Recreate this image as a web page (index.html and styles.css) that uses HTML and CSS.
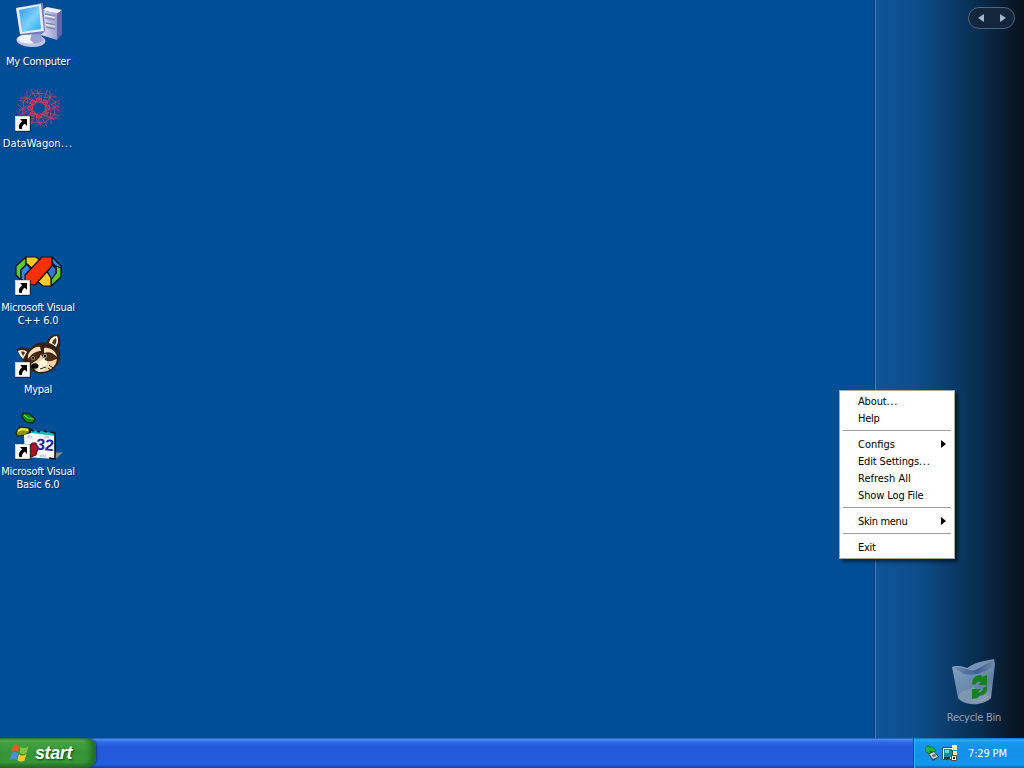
FILE: index.html
```html
<!DOCTYPE html>
<html lang="en">
<head>
<meta charset="utf-8">
<title>Desktop</title>
<link rel="stylesheet" href="styles.css">
</head>
<body>
<svg class="defs" width="0" height="0" aria-hidden="true">
  <defs>
    <g id="shortcut">
      <rect x="0" y="0" width="15" height="15" fill="#fff"/>
      <path d="M.5 15V.5H15" fill="none" stroke="#d5d2c8"/>
      <path d="M0 15.3H15.3V0" fill="none" stroke="#222"/>
      <path d="M5 3h7v7l-2.200-2.200C7.500 9.300 7 10.500 7 13H4.500C3 10 4.500 7.500 7.200 5.200z" fill="#000"/>
    </g>
    <g id="wedge" fill="none" stroke="#c4406c" stroke-width=".9">
      <path d="M-6-22L3-13M4-22L-5-12M-8-17L7-16M-2-21L1-11M9-21L6-11M-4-11L4-7M3-12L-3-6"/>
      <circle cx="0" cy="-9" r="2.500" stroke="#e0384c" stroke-width="1.300"/>
    </g>
  </defs>
</svg>
<main class="desktop">
  <aside class="sidebar">
    <div class="pager">
      <svg width="47" height="22" viewBox="0 0 47 22"><path d="M10 11l6-4v8zM38 11l-6-4v8z" fill="#a6b4d0"/></svg>
    </div>
  </aside>

  <div class="icon computer">
    <svg width="48" height="48" viewBox="0 0 48 48">
      <defs>
        <linearGradient id="scr" x1="0" y1="0" x2="1" y2="1"><stop offset="0" stop-color="#2f9af0"/><stop offset=".55" stop-color="#7bd2fb"/><stop offset="1" stop-color="#20a8ee"/></linearGradient>
        <linearGradient id="tow" x1="0" x2="1"><stop offset="0" stop-color="#dcdff4"/><stop offset="1" stop-color="#9a9fd0"/></linearGradient>
      </defs>
      <path d="M27 7l5-3 15 3-5 4z" fill="#edeefb"/>
      <path d="M26 7l16 3v27l-16-5z" fill="url(#tow)"/>
      <path d="M42 11l5-4v24l-5 6z" fill="#6268aa"/>
      <path d="M30 11l10 2M30 15l10 2M31 20l9 2M31 24l9 2" stroke="#8287b9" stroke-width="1.500"/>
      <path d="M30 12.500l10 2M31 21.500l9 2" stroke="#fff"/>
      <ellipse cx="16" cy="37.500" rx="14.500" ry="6.500" fill="#c0c4e6" transform="rotate(3 16 37)"/>
      <ellipse cx="15" cy="36" rx="12" ry="4.500" fill="#f1f2fb"/>
      <path d="M17 30l9 1 2 7-8 3-5-4z" fill="#9aa2d2"/>
      <path d="M1 5l25-5h2l2 28-3 3-22 1z" fill="#7379b4"/>
      <path d="M1 5l25-4 3 27-24 3z" fill="#e9ebf9"/>
      <path d="M4 7l20-4 2 23-19 3z" fill="url(#scr)"/>
    </svg>
    <span class="label">My Computer</span>
  </div>

  <div class="icon wagon">
    <svg width="48" height="48" viewBox="0 0 48 48">
      <g transform="translate(24 23) scale(.96 .88)">
        <use href="#wedge"/><use href="#wedge" transform="rotate(45)"/><use href="#wedge" transform="rotate(90)"/><use href="#wedge" transform="rotate(135)"/>
        <use href="#wedge" transform="rotate(180)"/><use href="#wedge" transform="rotate(225)"/><use href="#wedge" transform="rotate(270)"/><use href="#wedge" transform="rotate(315)"/>
      </g>
      <use href="#shortcut" x="0" y="31"/>
    </svg>
    <span class="label">DataWagon<span class="dots wide">...</span></span>
  </div>

  <div class="icon cpp">
    <svg width="48" height="48" viewBox="0 0 48 48">
      <g stroke="#0b1020" stroke-width="1.200" stroke-linejoin="round" transform="translate(0 1)">
        <path d="M1 16L11 7v8l-5 5v10l-5-5z" fill="#5dcb2b"/>
        <path d="M6 20l6-6 7 10-8 9-5-4z" fill="#3a83e8"/>
        <path d="M11 7h10l6 5-7 9-9-8z" fill="#f4c91f"/>
        <path d="M37 7l9 9v6l-5-5-5-6z" fill="#3f89e6"/>
        <path d="M46 18v9L36 36v-8l5-5v-7z" fill="#5dcb2b"/>
        <path d="M32 21l4-7 5 4v5l-5 7z" fill="#3575d4"/>
        <path d="M24 28l7-8 5 8v8h-8l-6-5z" fill="#f8ca2c"/>
        <path d="M27 7h10v9L20 35l-10-1v-9z" fill="#fa3009"/>
      </g>
      <use href="#shortcut" x="0" y="31"/>
    </svg>
    <span class="label">Microsoft Visual<br>C++ 6.0</span>
  </div>

  <div class="icon mypal">
    <svg width="48" height="48" viewBox="0 0 48 48">
      <path d="M2 19c2-4 9-2 13-1C20 12 26 10 32 12c0-5 5-9 11-9 4 5 2 11 1 15 3 8 1 14-4 18-7 8-17 8-23 4L9 31c-3-4-5-7-7-12z" fill="#372214"/>
      <path d="M3 20c3-2 8-1 9 1l-4 7c-2-2-4-5-5-8zM34 12c1-4 4-7 8-7 2 4 1 8-1 11-2-2-4-3-7-4z" fill="#fbf3df"/>
      <path d="M37 12c1-3 2-4 4-5 1 3 0 5-1 7zM6 21c2-1 4 0 4 1l-2 3z" fill="#51331e"/>
      <path d="M13 24c3-6 8-9 12-8l1 4c-4 0-9 2-13 8zM29 17c6-1 12 3 13 9-4-4-8-6-13-4z" fill="#f2dfba"/>
      <path d="M16 33c4-3 8-4 10-10 3 8 9 7 16 5-1 10-12 15-21 12z" fill="#ead3a5"/>
      <path d="M22 32c4-3 7-3 8-9l2 9c-1 7-5 9-9 9z" fill="#fff5df"/>
      <path d="M14 28c2-5 6-7 10-6l-2 6-7 5zM29 23c5-2 9 1 12 4-3 4-8 4-11 2z" fill="#4c2d1b"/>
      <circle cx="18" cy="27" r="2" fill="#8b8870"/><circle cx="30" cy="25" r="2.200" fill="#a7a38b"/>
      <circle cx="18" cy="27" r="1" fill="#070707"/><circle cx="30" cy="25" r="1.200" fill="#070707"/>
      <ellipse cx="20" cy="35" rx="3.500" ry="2.800" fill="#070707"/>
      <path d="M25 38l6-2M34 34l7 5M33 37l5 4" stroke="#2b1b13" fill="none"/>
      <use href="#shortcut" x="0" y="31"/>
    </svg>
    <span class="label">Mypal</span>
  </div>

  <div class="icon vb">
    <svg width="48" height="48" viewBox="0 0 48 48">
      <path d="M8 0l7 1 5 5-2 4-7-1-4-5z" fill="#17881c" stroke="#041a08" stroke-width="1.200"/>
      <path d="M9 2l4 3 6 1" stroke="#61d04e" stroke-width="1.200" fill="none"/>
      <path d="M1 19l4-5 9 1 1 4-5 3-8 1z" fill="#8b9415" stroke="#202608" stroke-width="1.200"/>
      <path d="M3 18l4-2 6 1" stroke="#ecea48" stroke-width="2" fill="none"/>
      <path d="M15 15v7M13 24l-2 3" stroke="#101010" stroke-width="1.500"/>
      <path d="M39 40l9-1-6 6-4 2z" fill="#888"/>
      <path d="M9 22l7-2 1-2 23 3v25l-30-2z" fill="#f5f7ff"/>
      <path d="M16 17l24 3v3l-24-3z" fill="#14bbc0"/>
      <path d="M16 17l3 1M22 18l3 1M29 18l3 1M35 19l5 1v26l-6-1" stroke="#111" stroke-width="1.600" fill="none"/>
      <path d="M12 24h5M29 24h5M25 43h6" stroke="#d1d2e0" stroke-width="3"/>
      <path d="M17 30h4l2 5-2 7-5 2-3-5z" fill="#a61622" stroke="#560a11"/>
      <text class="glyph" x="21" y="37" transform="rotate(5 27 34)">32</text>
      <use href="#shortcut" x="0" y="31"/>
    </svg>
    <span class="label">Microsoft Visual<br>Basic 6.0</span>
  </div>

  <div class="icon bin">
    <svg width="48" height="50" viewBox="0 0 48 50">
      <defs>
        <linearGradient id="glass" x1="0" y1="0" x2=".7" y2="1"><stop offset="0" stop-color="#8aa6c0"/><stop offset=".45" stop-color="#6f8fb2"/><stop offset=".75" stop-color="#6482a5"/><stop offset="1" stop-color="#8296aa"/></linearGradient>
        <linearGradient id="rim" x1="0" x2="1"><stop offset="0" stop-color="#6d8cae"/><stop offset=".6" stop-color="#3c5f96"/><stop offset="1" stop-color="#71879f"/></linearGradient>
      </defs>
      <path d="M1 9c5-2 10-1 15 1C25 4 32 3 43 1l1 5-4 34c-5 6-20 9-30 3L7 40z" fill="url(#glass)"/>
      <path d="M2 9c8-1 13 2 20 3C30 10 36 3 43 2l-2 7c-10 7-20 9-28 7z" fill="url(#rim)"/>
      <path d="M7 39c4-9 9-5 15-10l17 10c-9 7-23 9-31 2z" fill="#9badbd" opacity=".45"/>
      <path d="M2 9c8-1 13 2 20 3C30 10 36 3 43 2" stroke="#8ba2b6" stroke-width=".8" fill="none"/>
      <path d="M21 26c0-6 4-9 9-9l1 2 5-2v10h-9l3-3c-3-1-5 0-6 3z" fill="#16801f"/>
      <path d="M36 28c1 6-3 10-8 10l-1 2-6 1V31h9l-3 3c3 1 5-1 5-4z" fill="#16801f"/>
    </svg>
    <span class="label">Recycle Bin</span>
  </div>

  <nav class="menu">
    <div class="item about"><span>About<span class="dots">...</span></span></div>
    <div class="item help">Help</div>
    <hr>
    <div class="item configs">Configs<i class="arrow"></i></div>
    <div class="item edit"><span>Edit Settings<span class="dots">...</span></span></div>
    <div class="item refresh">Refresh All</div>
    <div class="item log">Show Log File</div>
    <hr>
    <div class="item skin">Skin menu<i class="arrow"></i></div>
    <hr>
    <div class="item exit">Exit</div>
  </nav>
</main>

<footer class="taskbar">
  <div class="start">
    <svg width="20" height="20" viewBox="0 0 20 20">
      <path d="M3 3c2-2 4-2 6 0L8 9C6 7 4 7 1.500 9z" fill="#ef5b22"/>
      <path d="M10.500 3.500c2 2 5 2 8 0l-2 6.500c-2 1.500-4 1.500-7-.500z" fill="#84c544"/>
      <path d="M1.500 10.500c2-2 4-1.500 6.500 0L6.500 17c-2-2-4-2-6.500 0z" fill="#4d8df0"/>
      <path d="M9 11c2 2 5 2 7.500 0l-2 6.500c-2 1.500-5 1.500-7-.500z" fill="#f8c92d"/>
    </svg>
    <span class="start-text">start</span>
  </div>
  <div class="tasks"></div>
  <div class="tray">
    <svg width="14" height="18" viewBox="0 0 14 18">
      <path d="M2 8l6-2 6 7-6 4z" fill="#333d44"/><path d="M4 10l5-2 4 5-5 2z" fill="#c8d1c8"/><path d="M7 11l3-1 1 2-3 1z" fill="#526574"/>
      <path d="M0 5l3-4 1 2h4l3 4-4 1-2-1v3L1 8z" fill="#21b63a" stroke="#08672b" stroke-width=".7"/>
    </svg>
    <svg width="16" height="18" viewBox="0 0 16 18">
      <path d="M.5 3.500h10v12h-10z" fill="#effadf" stroke="#37504a"/><path d="M2 5h8v8H2z" fill="#158c9b"/><path d="M3 6h4v3H3z" fill="#65d8d4"/><path d="M2 13h6v2H2z" fill="#173e47"/>
      <path d="M10 1h5v5h-5z" fill="#f4efad"/><path d="M11 7h4v4h-4z" fill="#f0e5a0"/><path d="M9.500 11.500h5v5h-5z" fill="#fff" stroke="#4f4b35"/><path d="M11 13h2v2h-2z" fill="#242424"/>
    </svg>
    <span class="clock">7:29 PM</span>
  </div>
</footer>
</body>
</html>
```
FILE: styles.css
```css
* { box-sizing: border-box; }
body {
  margin: 0;
  width: 1024px;
  height: 768px;
  overflow: hidden;
  display: flex;
  flex-direction: column;
  font: 11px/13px Tahoma, "DejaVu Sans Condensed", "DejaVu Sans", sans-serif;
  font-stretch: condensed;
  letter-spacing: -0.25px;
}
.defs { position: absolute; }
.desktop {
  position: relative;
  flex: 1;
  display: flex;
  justify-content: flex-end;
  background: #004e98;
}
.sidebar {
  width: 149px;
  border-left: 1px solid #4c80b5;
  box-shadow: -1px 0 #063c7b;
  background: linear-gradient(90deg, #0f549b 0, #0d4e8c 28%, #0b3b6a 52%, #0a2b4b 72%, #09192a 90%, #08141f 100%);
  display: flex;
  justify-content: flex-end;
  align-items: flex-start;
  padding: 7px 9px;
}
.pager {
  width: 47px;
  height: 22px;
  border: 1px solid #54657b;
  border-radius: 11px;
  background: #14263c;
  display: flex;
}
.pager svg { margin: -1px; }
.icon {
  position: absolute;
  left: 0;
  width: 76px;
  display: flex;
  flex-direction: column;
  align-items: center;
  color: #fff;
  text-align: center;
  white-space: nowrap;
}
.icon svg { overflow: visible; margin-left: 2px; }
.label { margin-top: 4px; text-shadow: 1px 1px 1px #00285f; }
.dots { letter-spacing: 0.7px; }
.dots.wide { letter-spacing: 1px; }
.computer { top: 3px; }
.wagon { top: 85px; }
.wagon .label { letter-spacing: 0.05px; }
.cpp { top: 249px; }
.mypal { top: 331px; }
.vb { top: 413px; }
.bin { left: 936px; top: 658px; }
.bin .label { margin-top: 3px; color: #8fa1b5; text-shadow: none; }
.glyph {
  font: bold 16px "Liberation Sans", Arial, sans-serif;
  fill: #29249c;
}
.menu {
  position: absolute;
  left: 839px;
  top: 390px;
  width: 116px;
  height: 169px;
  padding: 2px;
  border: 1px solid #aca899;
  background: #fff;
  color: #000;
  box-shadow: 3px 3px 3px rgba(0, 0, 0, .5);
}
.item {
  display: flex;
  align-items: center;
  justify-content: space-between;
  height: 17px;
  padding: 0 6px 0 16px;
  white-space: nowrap;
}
.about, .edit { letter-spacing: -0.15px; }
.configs, .refresh { letter-spacing: 0; }
.log { letter-spacing: -0.12px; }
.skin { letter-spacing: -0.35px; }
.menu hr {
  height: 1px;
  margin: 3px 1px 5px;
  border: 0;
  background: #9d9d99;
}
.arrow {
  margin-bottom: 2px;
  border-left: 5px solid #000;
  border-top: 4px solid transparent;
  border-bottom: 4px solid transparent;
}
.taskbar {
  display: flex;
  height: 30px;
  background: linear-gradient(#1f50b8 0, #4b8df5 5%, #316de8 12%, #255bdc 28%, #235bdb 70%, #2560e0 88%, #1941a5 100%);
}
.start {
  width: 96px;
  display: flex;
  align-items: center;
  padding-left: 10px;
  gap: 5px;
  border-radius: 0 9px 10px 0;
  background: linear-gradient(#327a32 0, #66b366 7%, #43a143 18%, #369336 50%, #389838 80%, #246b24 100%);
  box-shadow: inset -5px 0 6px #226a26, 1px 0 2px #17378a;
}
.start-text {
  font: italic bold 18px/22px "Liberation Sans", sans-serif;
  letter-spacing: -0.4px;
  color: #fff;
  text-shadow: 1px 1px 2px #173f18;
}
.tasks { flex: 1; }
.tray {
  width: 111px;
  display: flex;
  align-items: center;
  padding-left: 11px;
  border-left: 1px solid #0c3da5;
  background: linear-gradient(#0c66bd 0, #1fb3f4 6%, #1896ec 16%, #128fe8 60%, #1499ee 88%, #0d62bb 100%);
  box-shadow: inset 1px 0 #2ab8f5;
  color: #fff;
}
.tray svg + svg { margin-left: 3px; }
.clock { margin-left: 10px; letter-spacing: -0.15px; }
```
